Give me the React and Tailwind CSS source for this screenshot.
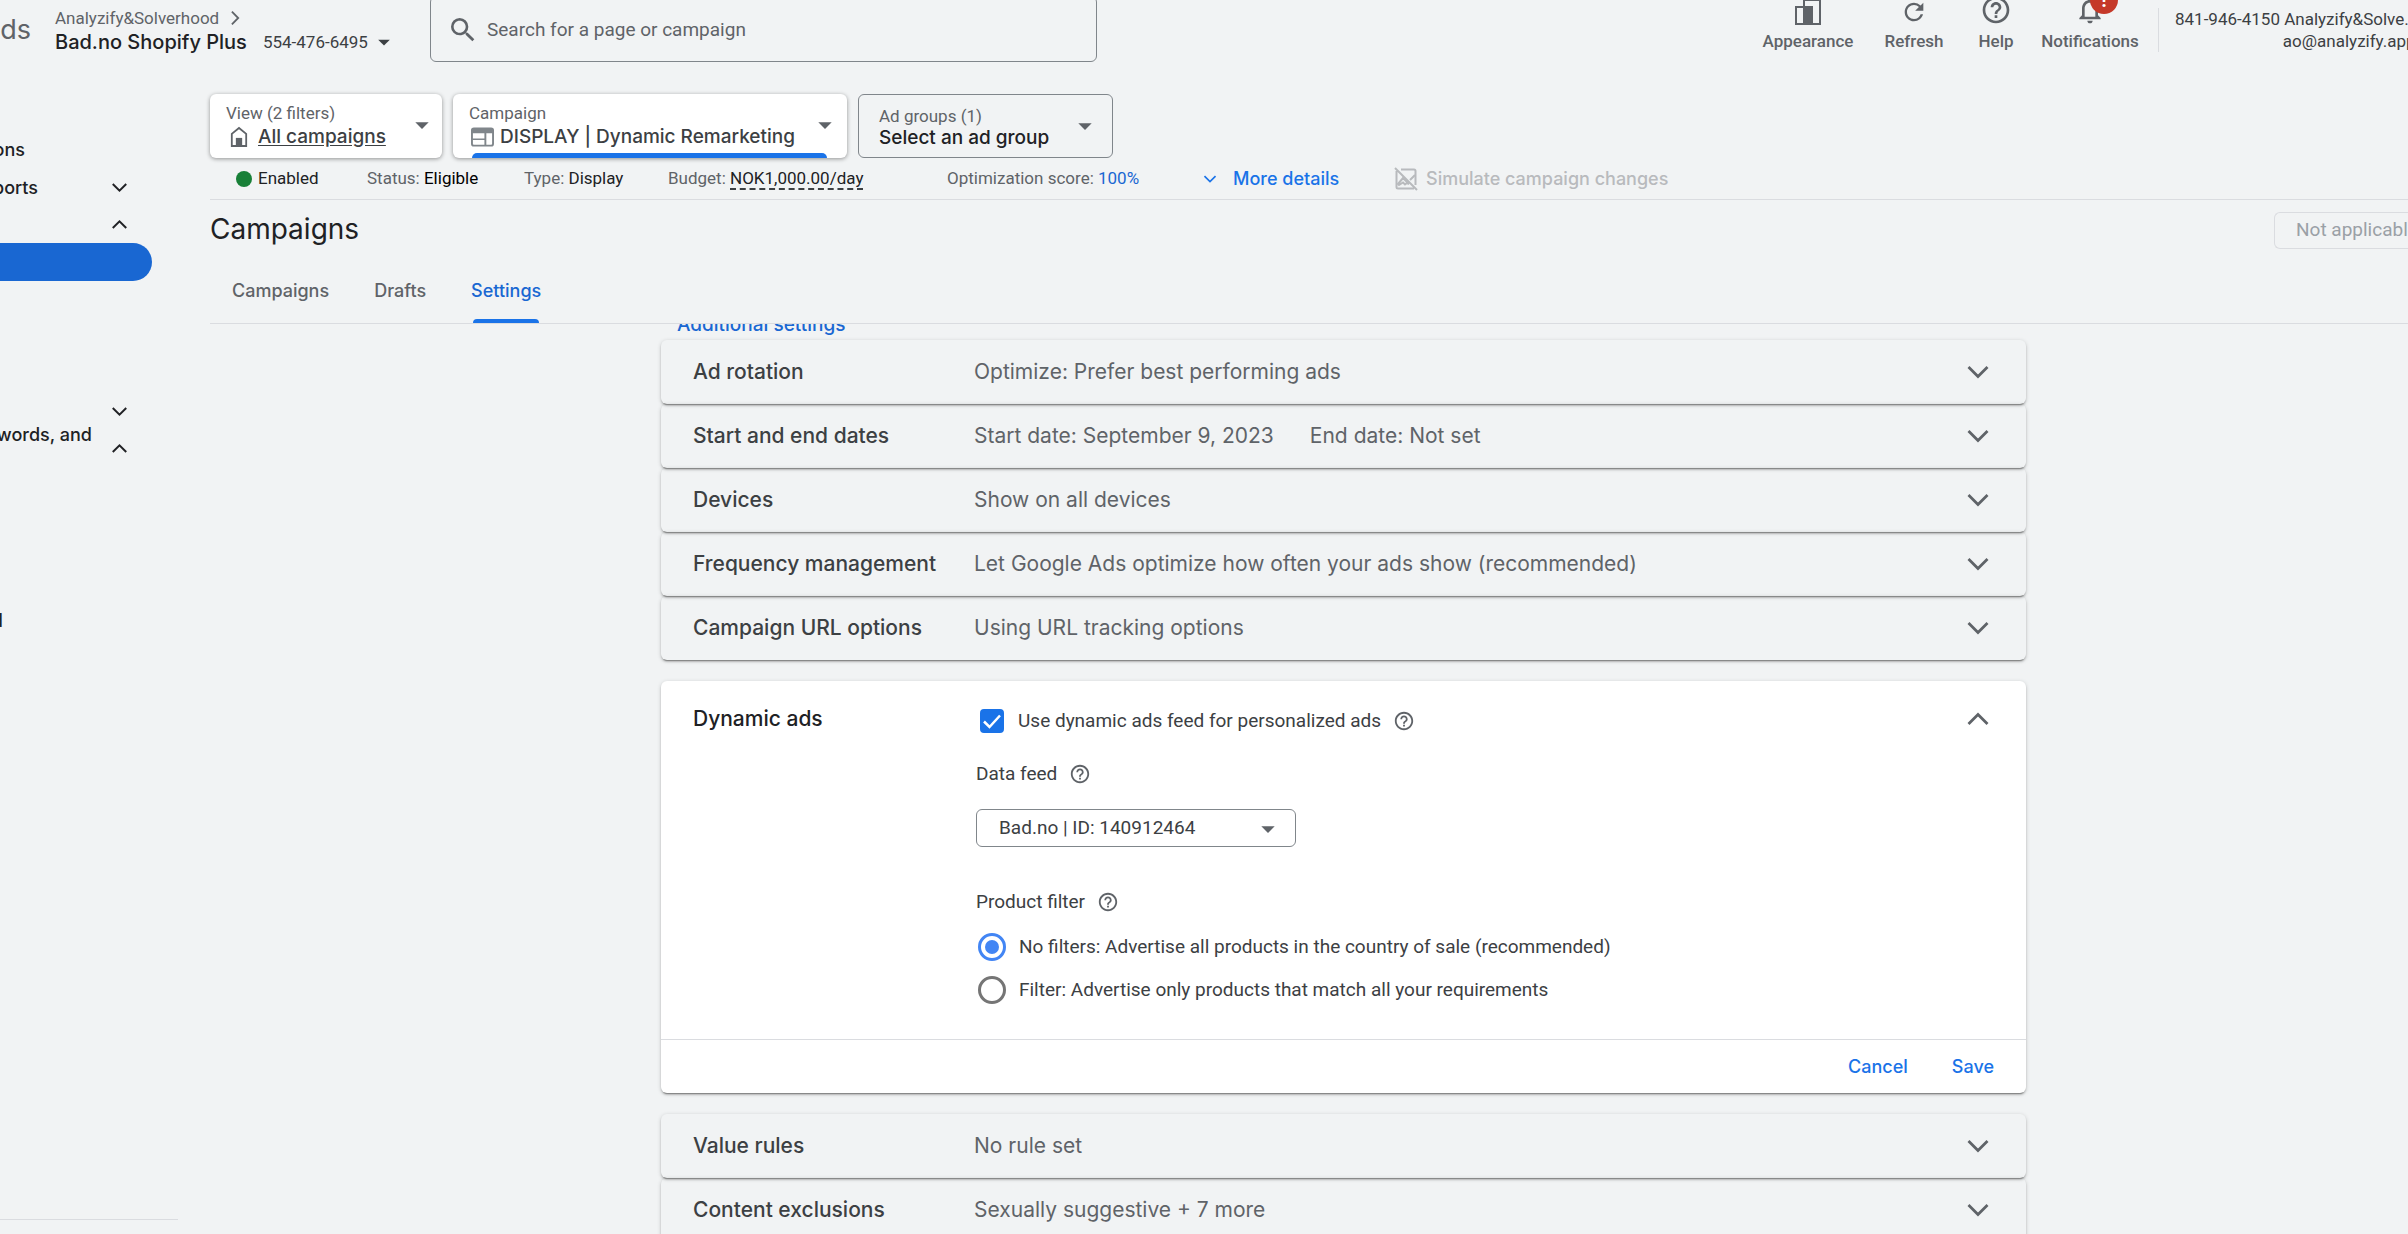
// import useState for the form controls
import React, { useState } from 'react';

// Material icons
import { MdSearch, MdRefresh, MdHelpOutline, MdNotificationsNone, MdArrowDropDown } from 'react-icons/md';

// Small chevron used by the sidebar, the cards and the details link
const Chevron = ({ up, className }) => (
  <svg viewBox="0 0 24 24" className={className} fill="none" stroke="currentColor" strokeWidth="2.8" aria-hidden="true">
    {up ? <path d="M2.500 17 12 7.500l9.500 9.500" /> : <path d="M2.500 7 12 16.500 21.500 7" />}
  </svg>
);

const HomeIcon = () => (
  <svg viewBox="0 0 20 24" className="ml-1 w-[18px] h-[22px]" fill="none" aria-hidden="true">
    <path d="M2 22V8.500L10 2l8 6.500V22z" stroke="#5f6368" strokeWidth="2" />
    <path d="M6.500 13h7v9h-7z" fill="#5f6368" />
  </svg>
);

const DisplayIcon = () => (
  <svg viewBox="0 0 24 20" className="ml-[2px] w-[23px] h-5" fill="none" aria-hidden="true">
    <rect x="1" y="1" width="22" height="18" rx="2" stroke="#80868b" strokeWidth="2" />
    <path d="M1 1h22v5H1zM14 6h2v13h-2zM1 11.500h14v1.500H1z" fill="#80868b" />
  </svg>
);

const AppearanceIcon = () => (
  <svg viewBox="0 0 28 28" className="w-7 h-7" aria-hidden="true">
    <path d="M2 9h10v17H2z" fill="none" stroke="#5f6368" strokeWidth="2" />
    <path d="M10 2h16v24H10z" fill="none" stroke="#5f6368" strokeWidth="2" />
    <path d="M9 8h10v19H9z" fill="#5f6368" />
  </svg>
);

const SimulateIcon = () => (
  <svg viewBox="0 0 24 24" className="w-6 h-6" fill="none" stroke="currentColor" strokeWidth="2" aria-hidden="true">
    <path d="M2.500 4v16q0 1.500 1.500 1.500H20M7 2.500h13q1.500 0 1.500 1.500V18M1 1l22 22" />
    <path d="m4 17 5-6 6 6-2-1-2 1.500-2-2L5 18zM16 13l5-5" />
  </svg>
);

// Icon with a caption under it, on the right of the top bar
const ToolButton = ({ label, className, children }) => (
  <button className={`flex flex-col items-center gap-[5px] pt-[2px] text-[17px] leading-5 font-medium text-[#5f6368] ${className}`}>
    <span className="relative h-7">{children}</span>
    {label}
  </button>
);

const Header = () => (
  <header className="-mt-1 h-[66px] flex items-start text-[#5f6368] whitespace-nowrap">
    {/* product name and account picker */}
    <div className="w-[31px] shrink-0 flex justify-end overflow-hidden pt-4 font-[Inter,sans-serif] text-[27px] leading-9">ds</div>
    <div className="w-[399px] shrink-0 pl-6 pt-2">
      <div className="flex items-center gap-3 pt-1 text-[17px] leading-5">
        Analyzify&amp;Solverhood
        <svg viewBox="0 0 10 16" className="w-[9px] h-4" fill="none" stroke="currentColor" strokeWidth="2" aria-hidden="true">
          <path d="m1 1 7 7-7 7" />
        </svg>
      </div>
      <button className="flex items-center leading-7 text-[#3c4043]">
        <span className="font-[Inter,sans-serif] text-xl leading-7 font-medium text-[#202124]">Bad.no Shopify Plus</span>
        <span className="pl-4 text-[17px]">554-476-6495</span>
        <MdArrowDropDown className="w-8 h-7" />
      </button>
    </div>

    {/* search */}
    <label className="w-[667px] h-[66px] shrink-0 flex items-center gap-2 px-4 pt-[2px] border border-[#80868b] rounded-md">
      <MdSearch className="w-8 h-8" />
      <input aria-label="Search" placeholder="Search for a page or campaign" className="flex-1 text-[19px] outline-none placeholder:text-[#5f6368]" />
    </label>

    {/* tools */}
    <div className="flex-1 flex justify-end">
      <ToolButton label="Appearance" className="w-[100px]"><AppearanceIcon /></ToolButton>
      <ToolButton label="Refresh" className="w-[112px]"><MdRefresh className="w-7 h-7" /></ToolButton>
      <ToolButton label="Help" className="w-[52px]"><MdHelpOutline className="w-8 h-8 -mt-1" /></ToolButton>
      <ToolButton label="Notifications" className="w-[136px]">
        <MdNotificationsNone className="w-8 h-8 -mt-1" />
        <span className="absolute left-4 -top-3 w-7 h-7 rounded-full bg-[#c53929] text-white text-xl leading-7 font-bold">!</span>
      </ToolButton>
      <div className="w-[250px] mt-3 pl-4 border-l border-[#dadce0] text-[17px] leading-[22px] text-[#3c4043]">
        <div className="inline-block text-right">
          <p>841-946-4150 Analyzify&amp;Solve…</p>
          <p>ao@analyzify.app</p>
        </div>
      </div>
    </div>
  </header>
);

// Left navigation, only its right edge is in view
const Sidebar = () => (
  <nav className="w-[210px] shrink-0 flex flex-col font-[Inter,sans-serif] text-lg leading-[38px] font-medium text-[#202124] whitespace-nowrap">
    <a href="#" className="mt-[69px] w-[25px] flex justify-end overflow-hidden">ons</a>
    <div className="flex items-center justify-between w-[128px] h-[37px]">
      <a href="#" className="w-[38px] flex justify-end overflow-hidden">ports</a>
      <Chevron className="w-[17px] h-[17px]" />
    </div>
    <div className="flex items-center justify-end w-[128px] h-[37px]">
      <Chevron up className="w-[17px] h-[17px]" />
    </div>
    <a href="#" aria-label="Current page" className="w-[152px] h-[38px] rounded-r-full bg-[#1967d2]" />
    <div className="mt-[112px] flex items-center justify-end w-[128px] h-[37px]">
      <Chevron className="w-[17px] h-[17px]" />
    </div>
    <div className="flex items-center justify-between w-[128px] h-[37px]">
      <a href="#" className="w-[92px] flex justify-end overflow-hidden pb-7">words, and</a>
      <Chevron up className="w-[17px] h-[17px]" />
    </div>
    <a href="#" className="mt-[135px] w-[3px] flex justify-end overflow-hidden">d</a>
    <hr className="mt-auto mb-[14px] w-[178px] border-[#dadce0]" />
  </nav>
);

// View, campaign and ad group pickers
const ScopePickers = () => (
  <div className="mt-8 flex gap-[11px] text-[#5f6368]">
    <button className="w-[232px] h-16 flex items-center justify-between pl-4 pr-1 pb-[2px] rounded-md bg-white text-left shadow-[0_1px_4px_rgba(0,0,0,0.4)]">
      <span className="text-[17px] leading-6">
        View (2 filters)
        <span className="flex items-center gap-[10px] font-[Inter,sans-serif] text-[19px] leading-6 font-medium text-[#3c4043]">
          <HomeIcon />
          <span className="underline underline-offset-2">All campaigns</span>
        </span>
      </span>
      <MdArrowDropDown className="w-8 h-8" />
    </button>
    <button className="relative w-[394px] h-16 flex items-center justify-between pl-4 pr-[6px] pb-[2px] rounded-md bg-white text-left shadow-[0_1px_4px_rgba(0,0,0,0.4)]">
      <span className="text-[17px] leading-6">
        Campaign
        <span className="flex items-center gap-[6px] font-[Inter,sans-serif] text-[19px] leading-6 font-medium text-[#3c4043]">
          <DisplayIcon />
          DISPLAY | Dynamic Remarketing
        </span>
      </span>
      <MdArrowDropDown className="w-8 h-8" />
      <span className="absolute left-[19px] right-5 bottom-0 h-[5px] rounded-t-md bg-[#1a73e8]" />
    </button>
    <button className="w-[255px] h-16 flex items-center justify-between pl-5 pr-[11px] rounded-md border border-[#80868b] text-left">
      <span className="text-[17px] leading-6">
        Ad groups (1)
        <span className="block font-[Inter,sans-serif] text-[19px] leading-5 font-medium text-[#202124]">Select an ad group</span>
      </span>
      <MdArrowDropDown className="w-8 h-8" />
    </button>
  </div>
);

// One line summary of the selected campaign
const StatusBar = () => (
  <div className="h-[42px] flex items-center pl-[26px] border-b border-[#dadce0] text-[17px] text-[#5f6368] whitespace-nowrap">
    <span className="flex items-center w-[131px] text-[#202124]">
      <span className="w-4 h-4 mr-[6px] rounded-full bg-[#188038]" />
      Enabled
    </span>
    <span className="w-[157px]">Status: <span className="text-black">Eligible</span></span>
    <span className="w-[144px]">Type: <span className="text-[#202124]">Display</span></span>
    <span className="w-[279px]">Budget: <button className="leading-5 border-b-2 border-dashed border-[#3c4043] text-[#202124]">NOK1,000.00/day</button></span>
    <span className="w-[256px]">Optimization score: <a href="#" className="text-[#1967d2]">100%</a></span>
    <button className="w-[191px] flex items-center gap-4 font-[Inter,sans-serif] text-lg font-medium text-[#1a73e8]">
      <Chevron className="w-[14px] h-[14px]" />
      More details
    </button>
    <button disabled className="flex items-center gap-2 font-[Inter,sans-serif] text-lg font-medium text-[#b8babd]">
      <SimulateIcon />
      Simulate campaign changes
    </button>
  </div>
);

// Collapsed settings card
const SettingRow = ({ title, children }) => (
  <button className="w-full h-16 shrink-0 flex items-center pl-8 pr-9 rounded-md text-left text-[21px] text-[#5f6368] shadow-[0_2px_2px_rgba(0,0,0,0.14),0_3px_1px_-2px_rgba(0,0,0,0.3),0_1px_4px_rgba(0,0,0,0.18)]">
    <span className="w-[281px] font-medium text-[#3c4043]">{title}</span>
    <span className="flex-1 flex gap-9">{children}</span>
    <Chevron className="w-6 h-6" />
  </button>
);

const HelpHint = () => <MdHelpOutline className="w-[22px] h-[22px] text-[#5f6368]" />;

// Expanded card with the feed form
const DynamicAds = () => {
  const [useFeed, setUseFeed] = useState(true);
  const [filter, setFilter] = useState('none');

  return (
    <section className="my-[21px] shrink-0 rounded-md bg-white shadow-[0_2px_2px_rgba(0,0,0,0.14),0_3px_1px_-2px_rgba(0,0,0,0.3),0_1px_4px_rgba(0,0,0,0.18)]">
      <div className="h-[359px] flex items-start pl-8 pr-9 pt-6 border-b border-[#dadce0]">
        <h2 className="w-[283px] text-[21px] leading-7 font-medium text-[#202124]">Dynamic ads</h2>
        <div className="flex-1 font-[Roboto,sans-serif] text-[19px] leading-7 text-[#3c4043]">
          <div className="flex items-center gap-3 pl-1 pt-[2px]">
            <label className="flex items-center gap-[14px]">
              <span className="relative w-6 h-6">
                <input
                  type="checkbox"
                  checked={useFeed}
                  onChange={(e) => setUseFeed(e.target.checked)}
                  className="peer block w-6 h-6 appearance-none rounded-sm border-2 border-[#5f6368] checked:border-[#1a73e8] checked:bg-[#1a73e8]"
                />
                <svg viewBox="0 0 24 24" className="absolute inset-0 pointer-events-none" fill="none" stroke="white" strokeWidth="2.500">
                  <path d="m4 12.500 5.500 5.500L20 6.500" />
                </svg>
              </span>
              Use dynamic ads feed for personalized ads
            </label>
            <HelpHint />
          </div>
          <div className="mt-[25px] flex items-center gap-3">
            <label htmlFor="feed">Data feed</label>
            <HelpHint />
          </div>
          <div className="relative mt-[21px] w-[320px]">
            <select id="feed" className="w-full h-[38px] pl-[22px] appearance-none border border-[#80868b] rounded-md outline-none">
              <option>Bad.no | ID: 140912464</option>
            </select>
            <MdArrowDropDown className="absolute right-3 top-1 w-8 h-8 text-[#5f6368] pointer-events-none" />
          </div>
          <div className="mt-[41px] flex items-center gap-3">
            Product filter
            <HelpHint />
          </div>
          <label className="mt-[17px] flex items-center gap-[13px] pl-[2px]">
            <input
              type="radio"
              name="filter"
              checked={filter === 'none'}
              onChange={() => setFilter('none')}
              className="w-7 h-7 appearance-none rounded-full border-3 border-[#757575] checked:border-[#4285f4] checked:bg-[#4285f4] checked:bg-clip-content p-1"
            />
            No filters: Advertise all products in the country of sale (recommended)
          </label>
          <label className="mt-[15px] flex items-center gap-[13px] pl-[2px]">
            <input
              type="radio"
              name="filter"
              checked={filter === 'custom'}
              onChange={() => setFilter('custom')}
              className="w-7 h-7 appearance-none rounded-full border-3 border-[#757575] checked:border-[#4285f4] checked:bg-[#4285f4] checked:bg-clip-content p-1"
            />
            Filter: Advertise only products that match all your requirements
          </label>
        </div>
        <button aria-label="Collapse" className="mt-[2px] text-[#5f6368]"><Chevron up className="w-6 h-6" /></button>
      </div>
      {/* actions */}
      <div className="h-[53px] flex items-center justify-end gap-11 pr-8 text-lg font-medium text-[#1a73e8]">
        <button>Cancel</button>
        <button>Save</button>
      </div>
    </section>
  );
};

const App = () => {
  return (
    <div className="h-screen flex flex-col overflow-hidden bg-[#f1f3f4] font-[Roboto,sans-serif]">
      <Header />
      <div className="flex-1 min-h-0 flex">
        <Sidebar />
        <main className="flex-1 min-w-0 flex flex-col">
          <ScopePickers />
          <StatusBar />

          {/* title */}
          <div className="h-[60px] flex items-center justify-between">
            <h1 className="pb-[2px] font-[Inter,sans-serif] text-[28px] text-[#202124]">Campaigns</h1>
            <button disabled className="w-[134px] h-[37px] pl-[21px] overflow-hidden text-left text-[19px] whitespace-nowrap border border-r-0 border-[#dadce0] rounded-l-md text-[#9aa0a6]">
              Not applicable
            </button>
          </div>

          {/* tabs */}
          <div className="h-16 flex gap-[45px] pl-[22px] border-b border-[#dadce0] font-[Inter,sans-serif] text-lg font-medium text-[#5f6368]">
            <a href="#">
              <span className="block leading-[61px]">Campaigns</span>
            </a>
            <a href="#">
              <span className="block leading-[61px]">Drafts</span>
            </a>
            <a href="#" className="relative text-[#1967d2]">
              <span className="block leading-[61px]">Settings</span>
              <span className="absolute inset-x-[2px] bottom-0 h-1 rounded-t-md bg-[#1a73e8]" />
            </a>
          </div>

          {/* settings list, scrolled down */}
          <div className="flex-1 min-h-0 overflow-hidden flex flex-col pl-[451px] pr-[382px] font-[Inter,sans-serif]">
            <a href="#" className="-mt-[13px] h-[29px] shrink-0 pl-4 text-[19px] leading-7 font-medium text-[#1967d2]">Additional settings</a>
            <SettingRow title="Ad rotation">Optimize: Prefer best performing ads</SettingRow>
            <SettingRow title="Start and end dates">
              <span>Start date: September 9, 2023</span>
              <span>End date: Not set</span>
            </SettingRow>
            <SettingRow title="Devices">Show on all devices</SettingRow>
            <SettingRow title="Frequency management">Let Google Ads optimize how often your ads show (recommended)</SettingRow>
            <SettingRow title="Campaign URL options">Using URL tracking options</SettingRow>
            <DynamicAds />
            <SettingRow title="Value rules">No rule set</SettingRow>
            <SettingRow title="Content exclusions">Sexually suggestive + 7 more</SettingRow>
          </div>
        </main>
      </div>
    </div>
  );
};

export default App;
